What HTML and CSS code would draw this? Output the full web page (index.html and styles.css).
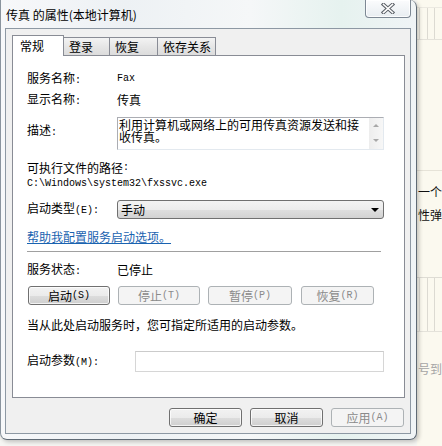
FILE: index.html
```html
<!DOCTYPE html>
<html lang="zh-CN">
<head>
<meta charset="utf-8">
<title>传真 的属性(本地计算机)</title>
<link rel="stylesheet" href="styles.css">
</head>
<body>
<div class="page">
  <div class="window">
    <div class="titlebar">
      <span class="title">传真 的属性(本地计算机)</span>
      <div class="close">
        <svg width="14" height="11" viewBox="0 0 14 11">
          <path d="M2.5 1.5 L11.5 9.5 M11.5 1.5 L2.5 9.5" stroke="#5a5f66" stroke-width="3.6" stroke-linecap="square" fill="none"/>
          <path d="M2.5 1.5 L11.5 9.5 M11.5 1.5 L2.5 9.5" stroke="#ffffff" stroke-width="1.6" stroke-linecap="square" fill="none"/>
        </svg>
      </div>
    </div>
    <div class="client">
      <div class="tabs">
        <div class="tab active">常规</div>
        <div class="tab t2">登录</div>
        <div class="tab t3">恢复</div>
        <div class="tab t4">依存关系</div>
      </div>
      <div class="panel">
        <div class="row r-name"><span class="lbl">服务名称<span class="m">:</span></span><span class="mono">Fax</span></div>
        <div class="row r-display"><span class="lbl">显示名称<span class="m">:</span></span><span>传真</span></div>
        <div class="row r-desc">
          <span class="lbl desc-lbl">描述<span class="m">:</span></span>
          <div class="descbox">
            <div class="desctext">利用计算机或网络上的可用传真资源发送和接收传真。</div>
            <div class="vscroll"><span class="up"></span><span class="down"></span></div>
          </div>
        </div>
        <div class="row r-pathlbl">可执行文件的路径<span class="m">:</span></div>
        <div class="row r-path mono">C:\Windows\system32\fxssvc.exe</div>
        <div class="row r-type">
          <span class="lbl">启动类型<span class="m">(E):</span></span>
          <div class="combo"><span>手动</span><span class="arrow"></span></div>
        </div>
        <div class="row r-link"><span class="link">帮助我配置服务启动选项。</span></div>
        <div class="sep"></div>
        <div class="row r-status"><span class="lbl">服务状态<span class="m">:</span></span><span>已停止</span></div>
        <div class="row r-btns">
          <div class="btn b-start">启动<span class="m">(S)</span></div>
          <div class="btn disabled b-stop">停止<span class="m">(T)</span></div>
          <div class="btn disabled b-pause">暂停<span class="m">(P)</span></div>
          <div class="btn disabled b-resume">恢复<span class="m">(R)</span></div>
        </div>
        <div class="row r-hint">当从此处启动服务时，您可指定所适用的启动参数。</div>
        <div class="row r-param">
          <span class="lbl param-lbl">启动参数<span class="m">(M):</span></span>
          <div class="input"></div>
        </div>
      </div>
      <div class="dlg-buttons">
        <div class="btn dbtn">确定</div>
        <div class="btn dbtn">取消</div>
        <div class="btn dbtn disabled">应用<span class="m">(A)</span></div>
      </div>
    </div>
  </div>
  <div class="backdrop">
    <div class="cells top"><span></span><span></span><span></span></div>
    <div class="bline l1"></div>
    <div class="frag f1">一个</div>
    <div class="frag f2">性弹</div>
    <div class="cells mid"><span></span><span></span><span></span></div>
    <div class="frag f3">号到</div>
  </div>
</div>
</body>
</html>
```

FILE: styles.css
```css
* { box-sizing: border-box; }

html, body {
  margin: 0;
  padding: 0;
}

body {
  width: 442px;
  height: 446px;
  overflow: hidden;
  background: #f6f6f3;
  font-family: "Noto Sans CJK SC", "Noto Sans", sans-serif;
  font-size: 12px;
  color: #000;
}

.page {
  display: flex;
  align-items: flex-start;
  width: 442px;
  height: 446px;
}

/* ---------- window frame ---------- */
.window {
  flex: none;
  width: 417px;
  height: 440px;
  display: flex;
  flex-direction: column;
  padding: 0 5px 5px 4px;
  border-left: 1px solid #8a949e;
  border-right: 1px solid #5f6a75;
  border-bottom: 1px solid #5f6a75;
  border-radius: 0 7px 7px 7px;
  background: linear-gradient(to right, #f7f8fa 0%, #edf1f4 30%, #f5f7f8 60%, #e6f2ef 82%, #f0f4f6 100%);
  box-shadow: 2px 2px 4px rgba(0, 0, 0, 0.22);
  position: relative;
  z-index: 1;
}

.titlebar {
  flex: none;
  height: 28px;
  display: flex;
  justify-content: space-between;
  align-items: flex-start;
}

.title {
  padding: 7px 0 0 1px;
  line-height: 16px;
  font-size: 12px;
  color: #000;
}

.close {
  width: 46px;
  height: 18px;
  border: 1px solid #7d8894;
  border-top: none;
  border-radius: 0 0 4px 4px;
  background: linear-gradient(#fbfcfd, #e8edf1);
  display: flex;
  align-items: center;
  justify-content: center;
  box-shadow: inset 0 0 0 1px rgba(255, 255, 255, 0.8);
}

/* ---------- client area ---------- */
.client {
  flex: 1;
  background: #f0f0f0;
  border: 1px solid #8d98a3;
  padding: 6px 0 0 6px;
  display: flex;
  flex-direction: column;
}

.tabs {
  display: flex;
  align-items: flex-end;
  height: 20px;
  position: relative;
  z-index: 2;
}

.tab {
  height: 18px;
  line-height: 17px;
  padding-left: 5px;
  border: 1px solid #898c95;
  border-bottom: none;
  background: linear-gradient(#f3f3f3, #e6e6e6 50%, #dcdcdc);
  font-size: 12px;
  margin-left: -1px;
}

.tab.active {
  height: 21px;
  line-height: 20px;
  margin-bottom: -1px;
  margin-left: 0;
  padding-left: 7px;
  width: 52px;
  background: #fff;
}

.tab.t2 { width: 47px; }
.tab.t3 { width: 49px; }
.tab.t4 { width: 59px; }

.panel {
  flex: none;
  width: 393px;
  height: 343px;
  background: #fff;
  border: 1px solid #898c95;
  padding: 0 0 0 14px;
  display: flex;
  flex-direction: column;
}

.row {
  display: flex;
  align-items: center;
  height: 16px;
  line-height: 16px;
}

.lbl {
  flex: none;
  width: 90px;
}

.m {
  font-family: "Liberation Mono", monospace;
  font-size: 10px;
}

.mono {
  font-family: "Liberation Mono", monospace;
  font-size: 10px;
}

.r-name { margin-top: 15px; }
.r-display { margin-top: 5px; }

.r-desc {
  margin-top: 9px;
  height: 33px;
  align-items: flex-start;
}

.desc-lbl { padding-top: 5px; }

.descbox {
  width: 267px;
  height: 33px;
  border: 1px solid #abadb3;
  border-right-color: #e3e9ef;
  border-bottom-color: #e3e9ef;
  display: flex;
  background: #fff;
}

.desctext {
  flex: 1;
  line-height: 12px;
  padding: 1px 0 0 1px;
  font-size: 12px;
  letter-spacing: 0;
}

.vscroll {
  width: 14px;
  margin-left: 3px;
  background: linear-gradient(to right, #ededed, #f7f7f7);
  display: flex;
  flex-direction: column;
  justify-content: space-between;
  align-items: center;
  padding: 6px 0 7px;
}

.up, .down {
  width: 0;
  height: 0;
  border-left: 3px solid transparent;
  border-right: 3px solid transparent;
}

.up { border-bottom: 3px solid #a8a8a8; }
.down { border-top: 3px solid #a8a8a8; }

.r-pathlbl { margin-top: 10px; }
.r-path { margin-top: 1px; height: 14px; line-height: 14px; }

.r-type {
  margin-top: 9px;
  height: 19px;
}

.combo {
  width: 267px;
  height: 19px;
  border: 1px solid #707070;
  border-radius: 3px;
  background: linear-gradient(#f3f3f3 0%, #ececec 50%, #dfdfdf 51%, #d2d2d2 100%);
  display: flex;
  align-items: center;
  justify-content: space-between;
  padding: 0 4px 0 3px;
  line-height: 17px;
}

.arrow {
  width: 0;
  height: 0;
  border-left: 4px solid transparent;
  border-right: 4px solid transparent;
  border-top: 4px solid #000;
}

.r-link { margin-top: 10px; }

.link {
  color: #1a63b0;
  text-decoration: underline;
}

.sep {
  margin-top: 6px;
  width: 354px;
  height: 2px;
  border-top: 1px solid #a0a0a0;
  border-bottom: 1px solid #ffffff;
}

.r-status { margin-top: 9px; }

.r-btns {
  margin-top: 8px;
  height: 19px;
}

.btn {
  height: 19px;
  border: 1px solid #707070;
  border-radius: 3px;
  background: linear-gradient(#f2f2f2 0%, #ebebeb 50%, #dddddd 51%, #cfcfcf 100%);
  box-shadow: inset 0 0 0 1px rgba(255, 255, 255, 0.75);
  display: flex;
  align-items: center;
  justify-content: center;
  line-height: 17px;
  font-size: 12px;
}

.btn.disabled {
  border-color: #adb2b5;
  background: #f4f4f4;
  color: #8a8a8a;
  box-shadow: none;
}

.b-start { width: 82px; margin-left: 1px; }
.b-stop { width: 82px; margin-left: 8px; }
.b-pause { width: 84px; margin-left: 8px; }
.b-resume { width: 73px; margin-left: 9px; }

.r-hint { margin-top: 12px; }

.r-param {
  margin-top: 18px;
  height: 21px;
}

.param-lbl { width: 108px; }

.input {
  width: 249px;
  height: 21px;
  border: 1px solid #d6d6d6;
  border-top-color: #cbcbcb;
  background: #fff;
}

.dlg-buttons {
  margin-top: 10px;
  display: flex;
  justify-content: flex-end;
  gap: 8px;
  padding-right: 6px;
}

.dbtn { width: 73px; }

/* ---------- page behind the dialog ---------- */
.backdrop {
  flex: none;
  width: 25px;
  height: 446px;
  background: #fbf9ef;
  display: flex;
  flex-direction: column;
  overflow: hidden;
  white-space: nowrap;
}

.cells {
  display: flex;
  padding-left: 2px;
  border-bottom: 1px solid #e4e2da;
}

.cells span {
  width: 9px;
  border-left: 1px solid #dcdad2;
}

.cells.top {
  margin-top: 7px;
  height: 33px;
  border-top: 1px solid #ebe9e1;
}

.bline {
  height: 1px;
  background: #e6e3d8;
}

.bline.l1 { margin-top: 130px; }

.frag {
  font-size: 12px;
  line-height: 20px;
  color: #111;
  padding-left: 1px;
}

.frag.f1 { margin-top: 11px; }
.frag.f2 { margin-top: 3px; }

.cells.mid {
  margin-top: 52px;
  height: 55px;
  border-top: 1px solid #dedcd4;
}

.frag.f3 {
  margin-top: 27px;
  color: #a6a6a6;
}
```
